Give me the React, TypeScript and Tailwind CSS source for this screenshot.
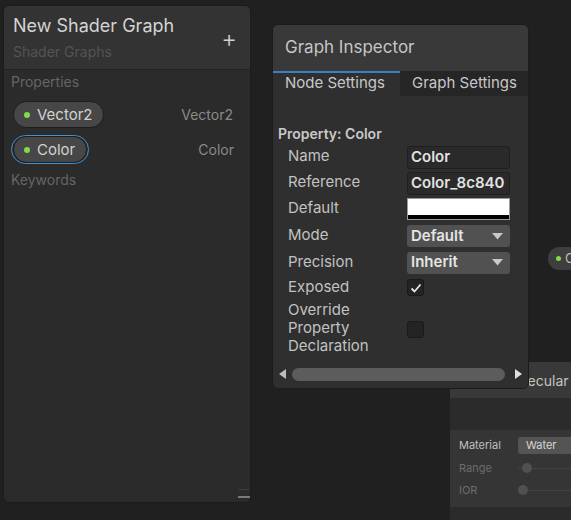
import React from "react";

const Tri = () => (
  <svg width="11" height="7" viewBox="0 0 11 7" className="shrink-0">
    <path d="M0 0 L11 0 L5.5 6.5 Z" fill="#c8c8c8" />
  </svg>
);

function Pill({ label, selected }: { label: string; selected?: boolean }) {
  return (
    <div
      className={
        selected
          ? "flex items-center h-[29px] rounded-full border border-[#3d93d8] p-[1px]"
          : "flex items-center h-[27px]"
      }
    >
      <div className="flex items-center h-[27px] rounded-full bg-[#474747] border border-[#1d1d1d] pl-[10px] pr-[11px] gap-[7px]">
        <div className="w-[6px] h-[6px] rounded-full bg-[#84d94b]" />
        <span className="text-[15px] text-[#d2d2d2] leading-none">{label}</span>
      </div>
    </div>
  );
}

function Row({ label, h, children }: { label: React.ReactNode; h: string; children?: React.ReactNode }) {
  return (
    <div className={`flex items-center ${h}`}>
      <div className="w-[119px] shrink-0 text-[15px] leading-[18px] text-[#c2c2c2] -mt-[2px]">{label}</div>
      <div className="flex-1">{children}</div>
    </div>
  );
}

export default function App() {
  return (
    <div
      className="relative w-[571px] h-[520px] overflow-hidden bg-[#202020]"
      style={{ fontFamily: "Inter, 'Noto Sans', sans-serif" }}
    >
      {/* Blackboard */}
      <div className="absolute left-[3px] top-[5px] w-[248px] h-[498px] rounded-[6px] bg-[#2b2b2b] border border-[#1c1c1c] overflow-hidden flex flex-col">
        <div className="h-[64px] bg-[#333333] border-b border-[#232323] flex items-start justify-between pl-[9px] pr-[13px]">
          <div className="flex flex-col">
            <div className="mt-[9px] text-[18px] leading-[22px] text-[#d4d4d4]">New Shader Graph</div>
            <div className="mt-[6px] text-[14px] leading-[18px] text-[#545454]">Shader Graphs</div>
          </div>
          <div className="mt-[21px] text-[24px] leading-[24px] text-[#d0d0d0] font-light">+</div>
        </div>
        <div className="flex flex-col px-[7px]">
          <div className="mt-[3px] text-[14px] leading-[18px] text-[#656565]">Properties</div>
          <div className="mt-[10px] flex items-center justify-between pl-[2px] pr-[10px]">
            <Pill label="Vector2" />
            <span className="text-[14px] text-[#8a8a8a]">Vector2</span>
          </div>
          <div className="mt-[7px] flex items-center justify-between pr-[9px]">
            <Pill label="Color" selected />
            <span className="text-[14px] text-[#8a8a8a]">Color</span>
          </div>
          <div className="mt-[7px] text-[14px] leading-[18px] text-[#656565]">Keywords</div>
        </div>
        <div className="flex-1" />
        <div className="flex flex-col items-end pb-[4px]">
          <div className="w-[12px] h-[1px] bg-[#3c3c3c]" />
          <div className="mt-[6px] w-[12px] h-[2px] bg-[#7a7a7a]" />
        </div>
      </div>

      {/* Right pill node */}
      <div className="absolute left-[548px] top-[247px] h-[23px] w-[40px] rounded-l-full bg-[#3e3e3e] flex items-center pl-[8px] gap-[4px] overflow-hidden">
        <div className="w-[5px] h-[5px] rounded-full bg-[#84d94b] shrink-0" />
        <span className="text-[13px] text-[#bdbdbd] whitespace-nowrap">Color</span>
      </div>

      {/* Bottom right node */}
      <div className="absolute left-[450px] top-[362px] w-[140px] h-[170px] bg-[#2b2b2b] flex flex-col">
        <div className="h-[36px] bg-[#393939] flex items-center pl-[60px]">
          <span className="text-[14px] text-[#c4c4c4] whitespace-nowrap">Specular</span>
        </div>
        <div className="h-[32px]" />
        <div className="h-[77px] bg-[#353535] flex flex-col pl-[9px]">
          <div className="mt-[7px] flex items-center h-[17px]">
            <span className="w-[59px] text-[11px] text-[#c0c0c0]">Material</span>
            <div className="flex-1 h-[17px] bg-[#545454] rounded-l-[3px] flex items-center pl-[8px] text-[11px] text-[#d6d6d6]">
              Water
            </div>
          </div>
          <div className="mt-[6px] flex items-center h-[16px]">
            <span className="w-[59px] text-[11px] text-[#6c6c6c]">Range</span>
            <div className="relative flex-1 h-[10px] flex items-center">
              <div className="w-full h-[1px] bg-[#434343]" />
              <div className="absolute left-[4px] top-0 w-[10px] h-[10px] rounded-full bg-[#505050]" />
            </div>
          </div>
          <div className="mt-[6px] flex items-center h-[16px]">
            <span className="w-[59px] text-[11px] text-[#6c6c6c]">IOR</span>
            <div className="relative flex-1 h-[10px] flex items-center">
              <div className="w-full h-[1px] bg-[#434343]" />
              <div className="absolute left-0 top-0 w-[10px] h-[10px] rounded-full bg-[#505050]" />
            </div>
          </div>
        </div>
      </div>

      {/* Graph Inspector */}
      <div className="absolute left-[272px] top-[24px] w-[257px] h-[365px] rounded-[6px] bg-[#2f2f2f] border border-[#1c1c1c] overflow-hidden flex flex-col">
        <div className="h-[46px] bg-[#393939] flex items-center pl-[12px]">
          <span className="text-[17px] text-[#c6c6c6]">Graph Inspector</span>
        </div>
        <div className="h-[25px] flex">
          <div className="w-[127px] border-t-2 border-[#3c7fc4] bg-[#2f2f2f] flex items-center pl-[12px]">
            <span className="text-[15px] text-[#c8c8c8] -mt-[2px]">Node Settings</span>
          </div>
          <div className="flex-1 bg-[#262626] flex items-center pl-[12px]">
            <span className="text-[15px] text-[#c8c8c8]">Graph Settings</span>
          </div>
        </div>
        <div className="flex flex-col pl-[5px]">
          <div className="mt-[29px] text-[14px] leading-[18px] font-semibold text-[#c9c9c9]">Property: Color</div>
          <div className="pl-[10px] pr-[18px] mt-[1px]">
            <Row label="Name" h="h-[26px]">
              <div className="h-[23px] bg-[#2a2a2a] border border-[#1f1f1f] rounded-[3px] flex items-center pl-[3px] text-[15px] font-semibold text-[#e2e2e2]">
                Color
              </div>
            </Row>
            <Row label="Reference" h="h-[26px]">
              <div className="h-[23px] bg-[#2a2a2a] border border-[#1f1f1f] rounded-[3px] flex items-center pl-[3px] text-[15px] font-semibold text-[#e2e2e2] overflow-hidden whitespace-nowrap">
                Color_8c840
              </div>
            </Row>
            <Row label="Default" h="h-[26px]">
              <div className="h-[22px] border border-[#9a9a9a] bg-white flex flex-col justify-end">
                <div className="h-[4px] bg-black" />
              </div>
            </Row>
            <Row label="Mode" h="h-[28px]">
              <div className="h-[22px] bg-[#515151] rounded-[3px] flex items-center justify-between pl-[4px] pr-[7px]">
                <span className="text-[15px] font-semibold text-[#e4e4e4]">Default</span>
                <Tri />
              </div>
            </Row>
            <Row label="Precision" h="h-[25px]">
              <div className="h-[22px] bg-[#515151] rounded-[3px] flex items-center justify-between pl-[4px] pr-[7px]">
                <span className="text-[15px] font-semibold text-[#e4e4e4]">Inherit</span>
                <Tri />
              </div>
            </Row>
            <Row label="Exposed" h="h-[25px]">
              <div className="w-[17px] h-[17px] bg-[#232323] border border-[#1a1a1a] rounded-[3px] flex items-center justify-center">
                <svg width="12" height="10" viewBox="0 0 12 10">
                  <path d="M1.5 5.5 L4.5 8.5 L10.5 1.5" stroke="#e6e6e6" strokeWidth="1.8" fill="none" />
                </svg>
              </div>
            </Row>
            <Row
              label={
                <>
                  Override
                  <br />
                  Property
                  <br />
                  Declaration
                </>
              }
              h="h-[58px]"
            >
              <div className="w-[17px] h-[17px] bg-[#232323] border border-[#1a1a1a] rounded-[3px]" />
            </Row>
          </div>
        </div>
        <div className="flex-1" />
        <div className="h-[16px] mb-[6px] flex items-center pl-[6px] pr-[6px] gap-[6px]">
          <svg width="7" height="10" viewBox="0 0 7 10"><path d="M7 0 L7 10 L0 5 Z" fill="#bdbdbd" /></svg>
          <div className="flex-1 h-[13px] rounded-full bg-[#5c5c5c]" />
          <svg width="7" height="10" viewBox="0 0 7 10" className="ml-[4px]"><path d="M0 0 L0 10 L7 5 Z" fill="#e0e0e0" /></svg>
        </div>
      </div>
    </div>
  );
}
